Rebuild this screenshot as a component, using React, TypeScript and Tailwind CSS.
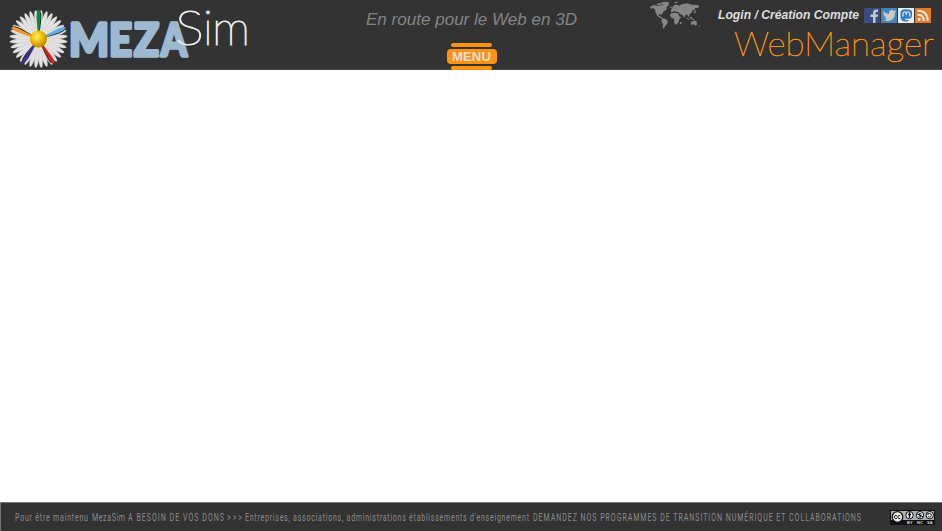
import React from "react";

type FitProps = {
  text: string;
  width: number;
  height: number;
  baseline: number;
  className: string;
};

// A line of text stretched to an exact width.
function FitText({ text, width, height, baseline, className }: FitProps) {
  return (
    <svg width={width} height={height} className="block shrink-0 overflow-visible">
      <text x="0" y={baseline} textLength={width} lengthAdjust="spacingAndGlyphs" className={className}>
        {text}
      </text>
    </svg>
  );
}

// A condensed, letter-spaced line for the footer.
function CondensedText({ text, width }: { text: string; width: number }) {
  return (
    <svg width={width} height="13" className="block shrink-0">
      <text
        x="0"
        y="10"
        transform="scale(0.7 1)"
        textLength={width / 0.7}
        lengthAdjust="spacing"
        className="fill-[#8c8c8c] font-['Roboto',sans-serif] text-[10px] font-normal"
      >
        {text}
      </text>
    </svg>
  );
}

const petals = Array.from({ length: 32 }, (_, i) => i * 11.25 + 5.6);
const colored = [
  { angle: 0, color: "#0b8a40" },
  { angle: 67, color: "#5fb0e6" },
  { angle: 148, color: "#d3221d" },
  { angle: 213, color: "#3a3585" },
  { angle: 293, color: "#f09a2e" },
];

function Daisy() {
  return (
    <svg width="60" height="60" viewBox="-29.5 -30 60 60" className="shrink-0">
      <defs>
        <radialGradient id="heart" cx="0.4" cy="0.35" r="0.65">
          <stop offset="0" stopColor="#fff27a" />
          <stop offset="0.45" stopColor="#f2c40c" />
          <stop offset="1" stopColor="#b98300" />
        </radialGradient>
      </defs>
      <circle r="21" fill="#c4c4c4" />
      {petals.map((a) => (
        <ellipse key={a} cx="0" cy="-18" rx="2.2" ry="11" fill="#e2e2e2" stroke="#b9b9b9" strokeWidth="0.3" transform={`rotate(${a})`} />
      ))}
      <circle r="10.5" fill="#e9e4c8" />
      {colored.map((p) => (
        <g key={p.angle} transform={`rotate(${p.angle})`}>
          <path d="M1 -6 L-0.8 -22 C-0.6 -27 0.4 -28 1.2 -28 C3.2 -27 3.6 -22 1 -6Z" fill="#222" />
          <path d="M-0.8 -6 L-2 -21 C-2 -27 -1 -29.3 0 -29.3 C1 -29.3 2 -27 2 -21 L0.8 -6Z" fill={p.color} />
        </g>
      ))}
      <circle r="8.6" fill="url(#heart)" />
    </svg>
  );
}

function Wordmark() {
  return (
    <svg width="180" height="70" className="shrink-0">
      <g fill="#9db9d2" stroke="#9db9d2" strokeWidth="3.400" strokeLinejoin="round" className="font-['Lato',sans-serif] text-[46px] font-black">
        <text x="0" y="55.5" textLength="40" lengthAdjust="spacingAndGlyphs">M</text>
        <text x="40" y="55.5" textLength="23" lengthAdjust="spacingAndGlyphs">E</text>
        <text x="65" y="55.5" textLength="25" lengthAdjust="spacingAndGlyphs">Z</text>
        <text x="92" y="55.5" textLength="26" lengthAdjust="spacingAndGlyphs">A</text>
      </g>
      <g fill="#ededed" stroke="#ededed" strokeWidth="1.100" className="font-['Lato',sans-serif] text-[47px] font-thin">
        <text x="106" y="45" textLength="29" lengthAdjust="spacingAndGlyphs">S</text>
        <text x="134" y="45">i</text>
        <text x="143" y="45" textLength="38" lengthAdjust="spacingAndGlyphs">m</text>
      </g>
    </svg>
  );
}

function WorldMap() {
  return (
    <svg width="50" height="30" viewBox="0 0 150 90" fill="#858585" className="shrink-0">
      <path d="M0 20 L12 15 L25 18 L38 15 L45 20 L51 24 L48 31 L42 33 L38 39 L34 45 L27 42 L27 47 L34 51 L39 56 L34 56 L23 49 L17 39 L15 29 L9 24 L2 26Z" />
      <path d="M18 12 L30 9 L36 14 L26 16Z" />
      <path d="M31 9 L43 5 L57 7 L55 17 L47 24 L42 19 L39 14Z" />
      <path d="M37 55 L46 56 L54 63 L51 73 L45 78 L42 86 L38 84 L39 73 L34 64Z" />
      <path d="M64 27 L70 17 L78 13 L86 17 L98 12 L113 10 L125 14 L139 14 L149 18 L144 24 L135 25 L132 32 L128 29 L125 38 L119 43 L117 51 L111 44 L107 45 L103 53 L97 45 L90 43 L86 37 L79 35 L74 33 L67 36 L62 35Z" />
      <path d="M63 40 L74 38 L84 40 L88 49 L94 52 L87 59 L86 67 L80 73 L75 74 L72 65 L73 56 L64 54 L60 46Z" />
      <path d="M122 66 L132 62 L139 64 L142 73 L137 77 L131 73 L123 75Z" />
      <path d="M110 54 L119 59 M118 54 L124 51 L126 57 L134 60" stroke="#858585" strokeWidth="2.4" />
      <path d="M73 6 H83 V9 H73Z M90 65 H94 V72 H90Z M146 77 H149 V80 H146Z M134 30 H137 V39 H131 V35H134Z M60 20H65V23H60Z" />
    </svg>
  );
}

function SocialIcons() {
  return (
    <div className="flex gap-px">
      <svg width="16" height="15" viewBox="0 0 16 15">
        <rect width="16" height="15" fill="#3b4c84" />
        <path d="M9 15 V9 H6.5 V6.5 H9 V5 Q9 1.5 12 1.5 H14 V4 H12.5 Q11.5 4 11.5 5 V6.5 H14 L13.5 9 H11.5 V15Z" fill="#c8c8ca" />
      </svg>
      <svg width="16" height="15" viewBox="0 0 16 15">
        <rect width="16" height="15" fill="#4385ba" />
        <path d="M2 3 Q5 6 8 6 Q7.5 2 11 2 L13 3 L15 2.5 L14 5 Q14 12 7 13 Q4 13 2 12 Q5 12 6 10.8 Q4 10.5 3.4 9 H5 Q2.4 8 2.3 6 L3.5 6.3 Q1.4 5 2 3Z" fill="#c9c9c9" />
      </svg>
      <svg width="16" height="15" viewBox="0 0 16 15">
        <rect width="16" height="15" fill="#ececec" />
        <path d="M2.5 5 Q2.5 1.5 7 1.2 Q14 .8 14 4 V7.5 Q14 10.5 11 10.8 H6.5 Q7 12.4 10.5 11.9 V13.2 Q3 15 2.5 9Z" fill="#2f80c7" />
        <path d="M5 8.5 V5.2 Q6.8 2.3 8.3 5.2 V7 M8.3 5.2 Q10 2.3 11.7 5.2 V8.5" fill="none" stroke="#ececec" strokeWidth="1.2" />
      </svg>
      <svg width="16" height="15" viewBox="0 0 16 15">
        <rect width="16" height="15" fill="#e77a20" />
        <circle cx="4.2" cy="11.3" r="1.6" fill="#e5e5e5" />
        <path d="M2.5 6.7 Q8.8 6.7 8.8 13 M2.5 2.8 Q12.7 2.8 12.7 13" fill="none" stroke="#e5e5e5" strokeWidth="2" />
      </svg>
    </div>
  );
}

function Licence() {
  return (
    <svg width="45" height="15" viewBox="0 0 45 15" className="shrink-0">
      <rect width="45" height="15" fill="#111" />
      <rect x="1" y="1" width="43" height="9" fill="#aab2ab" />
      <circle cx="7.5" cy="7" r="5.3" fill="#eee" stroke="#111" strokeWidth="1.3" />
      <path d="M7 5.8 A1.6 1.6 0 1 0 7 8.2 M10.4 5.8 A1.6 1.6 0 1 0 10.4 8.2" fill="none" stroke="#111" strokeWidth="1" />
      {[19.5, 30, 39.8].map((x) => (
        <circle key={x} cx={x} cy="5.2" r="3.7" fill="#f0f0f0" stroke="#111" strokeWidth="1" />
      ))}
      <path d="M19.5 2.3 V8 M18 4.5 H21" stroke="#111" strokeWidth="1.3" />
      <path d="M27 3.8 L33 6.7 M31.5 3.8 H29 V5 L31 5.7 V7 H28.5" fill="none" stroke="#111" />
      <path d="M38.3 4 A1.8 1.8 0 1 1 38.3 6.5 M37 4 H39" fill="none" stroke="#111" />
      <g className="fill-[#ddd] font-['Liberation_Sans',sans-serif] text-[4px] font-bold">
        <text x="17" y="14">BY</text>
        <text x="27" y="14">NC</text>
        <text x="37" y="14">SA</text>
      </g>
    </svg>
  );
}

function MenuButton() {
  return (
    <button className="flex w-[50px] flex-col items-center gap-[2px]">
      <span className="h-1 w-[41px] rounded-full bg-[#ff930f]" />
      <span className="flex h-[15px] w-[50px] items-center justify-center rounded-[4px] bg-[#ff930f]">
        <FitText text="MENU" width={39} height={15} baseline={12} className="fill-[#dedede] font-['Liberation_Sans',sans-serif] text-[13px] font-bold" />
      </span>
      <span className="h-1 w-[41px] rounded-full bg-[#ff930f]" />
    </button>
  );
}

export default function App() {
  return (
    <div className="flex h-[531px] w-[942px] flex-col overflow-hidden bg-white">
      <header className="flex h-[70px] shrink-0 border-b border-[#484848] bg-[#333]">
        <div className="flex w-[366px] pl-[9px]">
          <div className="pt-[9px]"><Daisy /></div>
          <Wordmark />
        </div>
        <div className="flex w-[211px] flex-col items-center pt-[9px]">
          <FitText text="En route pour le Web en 3D" width={211} height={34} baseline={16} className="fill-[#858585] font-['Liberation_Sans',sans-serif] text-[16px] italic" />
          <MenuButton />
        </div>
        <div className="w-[123px] pl-[73px]"><WorldMap /></div>
        <div className="flex flex-col pl-[18px]">
          <div className="flex h-[30px] pt-2">
            <FitText text="Login / Création Compte" width={141} height={20} baseline={11} className="fill-[#dedede] font-['Liberation_Sans',sans-serif] text-[12px] font-bold italic" />
            <div className="pl-[5px]"><SocialIcons /></div>
          </div>
          <div className="pl-4">
            <FitText text="WebManager" width={200} height={38} baseline={26} className="fill-[#ff930f] stroke-[#ff930f] stroke-[0.6px] font-['Lato',sans-serif] text-[34px] font-thin" />
          </div>
        </div>
      </header>
      <main className="flex-1" />
      <footer className="flex h-[29px] shrink-0 items-start border-t border-l border-[#777] bg-[#333] pt-2 pl-[14px]">
        <div className="flex w-[875px]">
          <div className="w-[77px]"><CondensedText text="Pour être maintenu" width={73} /></div>
          <div className="w-[36px]"><CondensedText text="MezaSim" width={33} /></div>
          <div className="w-[99px]"><CondensedText text="A BESOIN DE VOS DONS" width={96} /></div>
          <div className="w-[18px]"><CondensedText text=">>>" width={15} /></div>
          <div className="w-[288px]"><CondensedText text="Entreprises, associations, administrations établissements d'enseignement" width={284} /></div>
          <CondensedText text="DEMANDEZ NOS PROGRAMMES DE TRANSITION NUMÉRIQUE ET COLLABORATIONS" width={328} />
        </div>
        <div className="-mt-px"><Licence /></div>
      </footer>
    </div>
  );
}
